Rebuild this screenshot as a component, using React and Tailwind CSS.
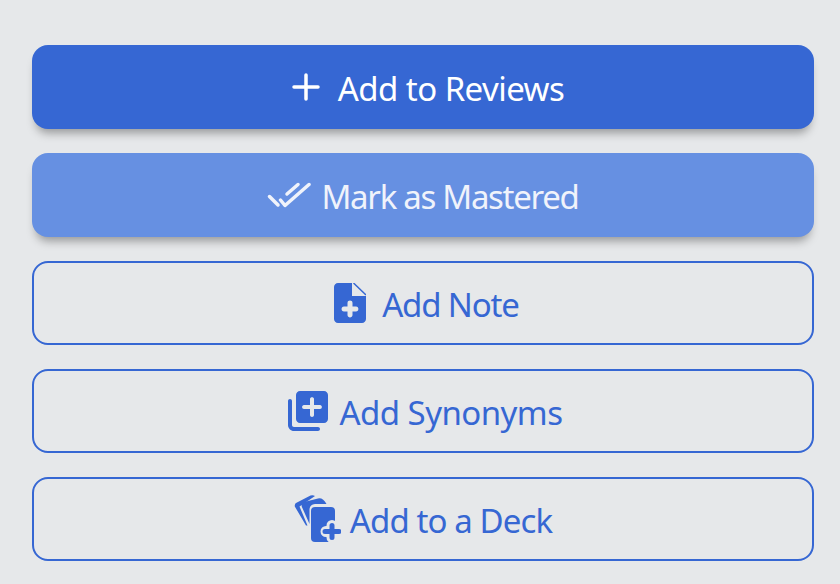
const PlusIcon = () => (
  <svg width="28" height="28" viewBox="0 0 28 28" fill="none" stroke="currentColor" strokeWidth="3.5" strokeLinecap="round" className="shrink-0">
    <path d="M14 2V26M2 14H26" />
  </svg>
);

const DoubleCheckIcon = () => (
  <svg width="44" height="26" viewBox="0 0 44 26" fill="none" stroke="currentColor" strokeWidth="3.5" strokeLinecap="round" strokeLinejoin="round" className="shrink-0">
    <path d="M2.500 14.500L11 23" />
    <path d="M13.500 18L18 23.500L42 2.500" />
    <path d="M20 12L31 2.500" />
  </svg>
);

const FileAddIcon = () => (
  <svg width="32" height="40" viewBox="0 0 32 40" fill="currentColor" className="shrink-0">
    <path fillRule="evenodd" d="M4 0H18V13H32V36C32 38.200 30.200 40 28 40H4C1.800 40 0 38.200 0 36V4C0 1.800 1.800 0 4 0ZM13.500 20V23.500H10C6.800 23.500 6.800 28.500 10 28.500H13.500V32C13.500 35.200 18.500 35.200 18.500 32V28.500H22C25.200 28.500 25.200 23.500 22 23.500H18.500V20C18.500 16.800 13.500 16.800 13.500 20Z" />
    <path d="M19.500 0L32 12" fill="none" stroke="currentColor" strokeWidth="1.500" />
  </svg>
);

const SynonymsIcon = () => (
  <svg width="40" height="40" viewBox="0 0 40 40" fill="currentColor" className="shrink-0">
    <path fillRule="evenodd" d="M12 0H36C38.200 0 40 1.800 40 4V28C40 30.200 38.200 32 36 32H12C9.800 32 8 30.200 8 28V4C8 1.800 9.800 0 12 0ZM22 8V14H16C13.500 14 13.500 18 16 18H22V24C22 26.500 26 26.500 26 24V18H32C34.500 18 34.500 14 32 14H26V8C26 5.500 22 5.500 22 8Z" />
    <path d="M0 10C0 8.900 .9 8 2 8S4 8.900 4 10V34C4 35.100 4.900 36 6 36H30C31.100 36 32 36.900 32 38S31.100 40 30 40H6C2.700 40 0 37.300 0 34V10Z" />
  </svg>
);

const DeckIcon = () => (
  <svg width="47" height="48" viewBox="0 0 47 48" fill="currentColor" className="shrink-0">
    <path d="M1 9.500Q1 8.500 2 8L16.500 .5Q19 -.3 21 1L5.500 11.500L13.500 30.500H12L.8 11.500Q.6 10.500 1 9.500Z" />
    <path d="M8 7.500L24 3.500Q29 2.500 32.500 9H21Q16 9.500 15.500 14V29L7.800 11.700Q7.200 9 8 7.500Z" />
    <rect x="17" y="12" width="24" height="35" rx="4" />
    <path d="M38 30.500V42.500M32 36.500H45" fill="none" stroke="#e6e8ea" strokeWidth="11" strokeLinecap="round" />
    <path d="M38 30.500V42.500M31 36.500H45" fill="none" stroke="currentColor" strokeWidth="5" strokeLinecap="round" />
  </svg>
);

const outline = 'flex h-[84px] w-full items-center justify-center rounded-2xl border-2 border-[#3667d3] text-[#3667d3]';

const App = () => {
  return (
    <div className="h-[584px] w-[840px] overflow-hidden bg-[#e6e8ea] pl-8 pr-[26px] pt-[45px] font-['Noto_Sans',sans-serif] text-[33px]">
      <div className="flex flex-col gap-6">
        <button className="flex h-[84px] w-full items-center justify-center gap-[18px] rounded-2xl bg-[#3667d3] pl-[10px] tracking-[-0.55px] text-white shadow-[0_8px_10px_-4px_rgba(0,0,0,0.35)]">
          <PlusIcon /> <span className="pt-1">Add to Reviews</span>
        </button>
        <button className="flex h-[84px] w-full items-center justify-center gap-[10px] rounded-2xl bg-[#6690e2] tracking-[-1.3px] text-[#f0f3fb] shadow-[0_8px_10px_-4px_rgba(0,0,0,0.35)]">
          <DoubleCheckIcon /> <span className="pt-1">Mark as Mastered</span>
        </button>
        <button className={`${outline} gap-4 pl-[7px] tracking-[-1.15px]`}>
          <FileAddIcon /> <span className="pt-1">Add Note</span>
        </button>
        <button className={`${outline} gap-3 pl-1 tracking-[-0.55px]`}>
          <SynonymsIcon /> <span className="pt-1">Add Synonyms</span>
        </button>
        <button className={`${outline} gap-[9px] tracking-[-0.9px]`}>
          <DeckIcon /> <span className="pt-1">Add to a Deck</span>
        </button>
      </div>
    </div>
  );
};

export default App;
